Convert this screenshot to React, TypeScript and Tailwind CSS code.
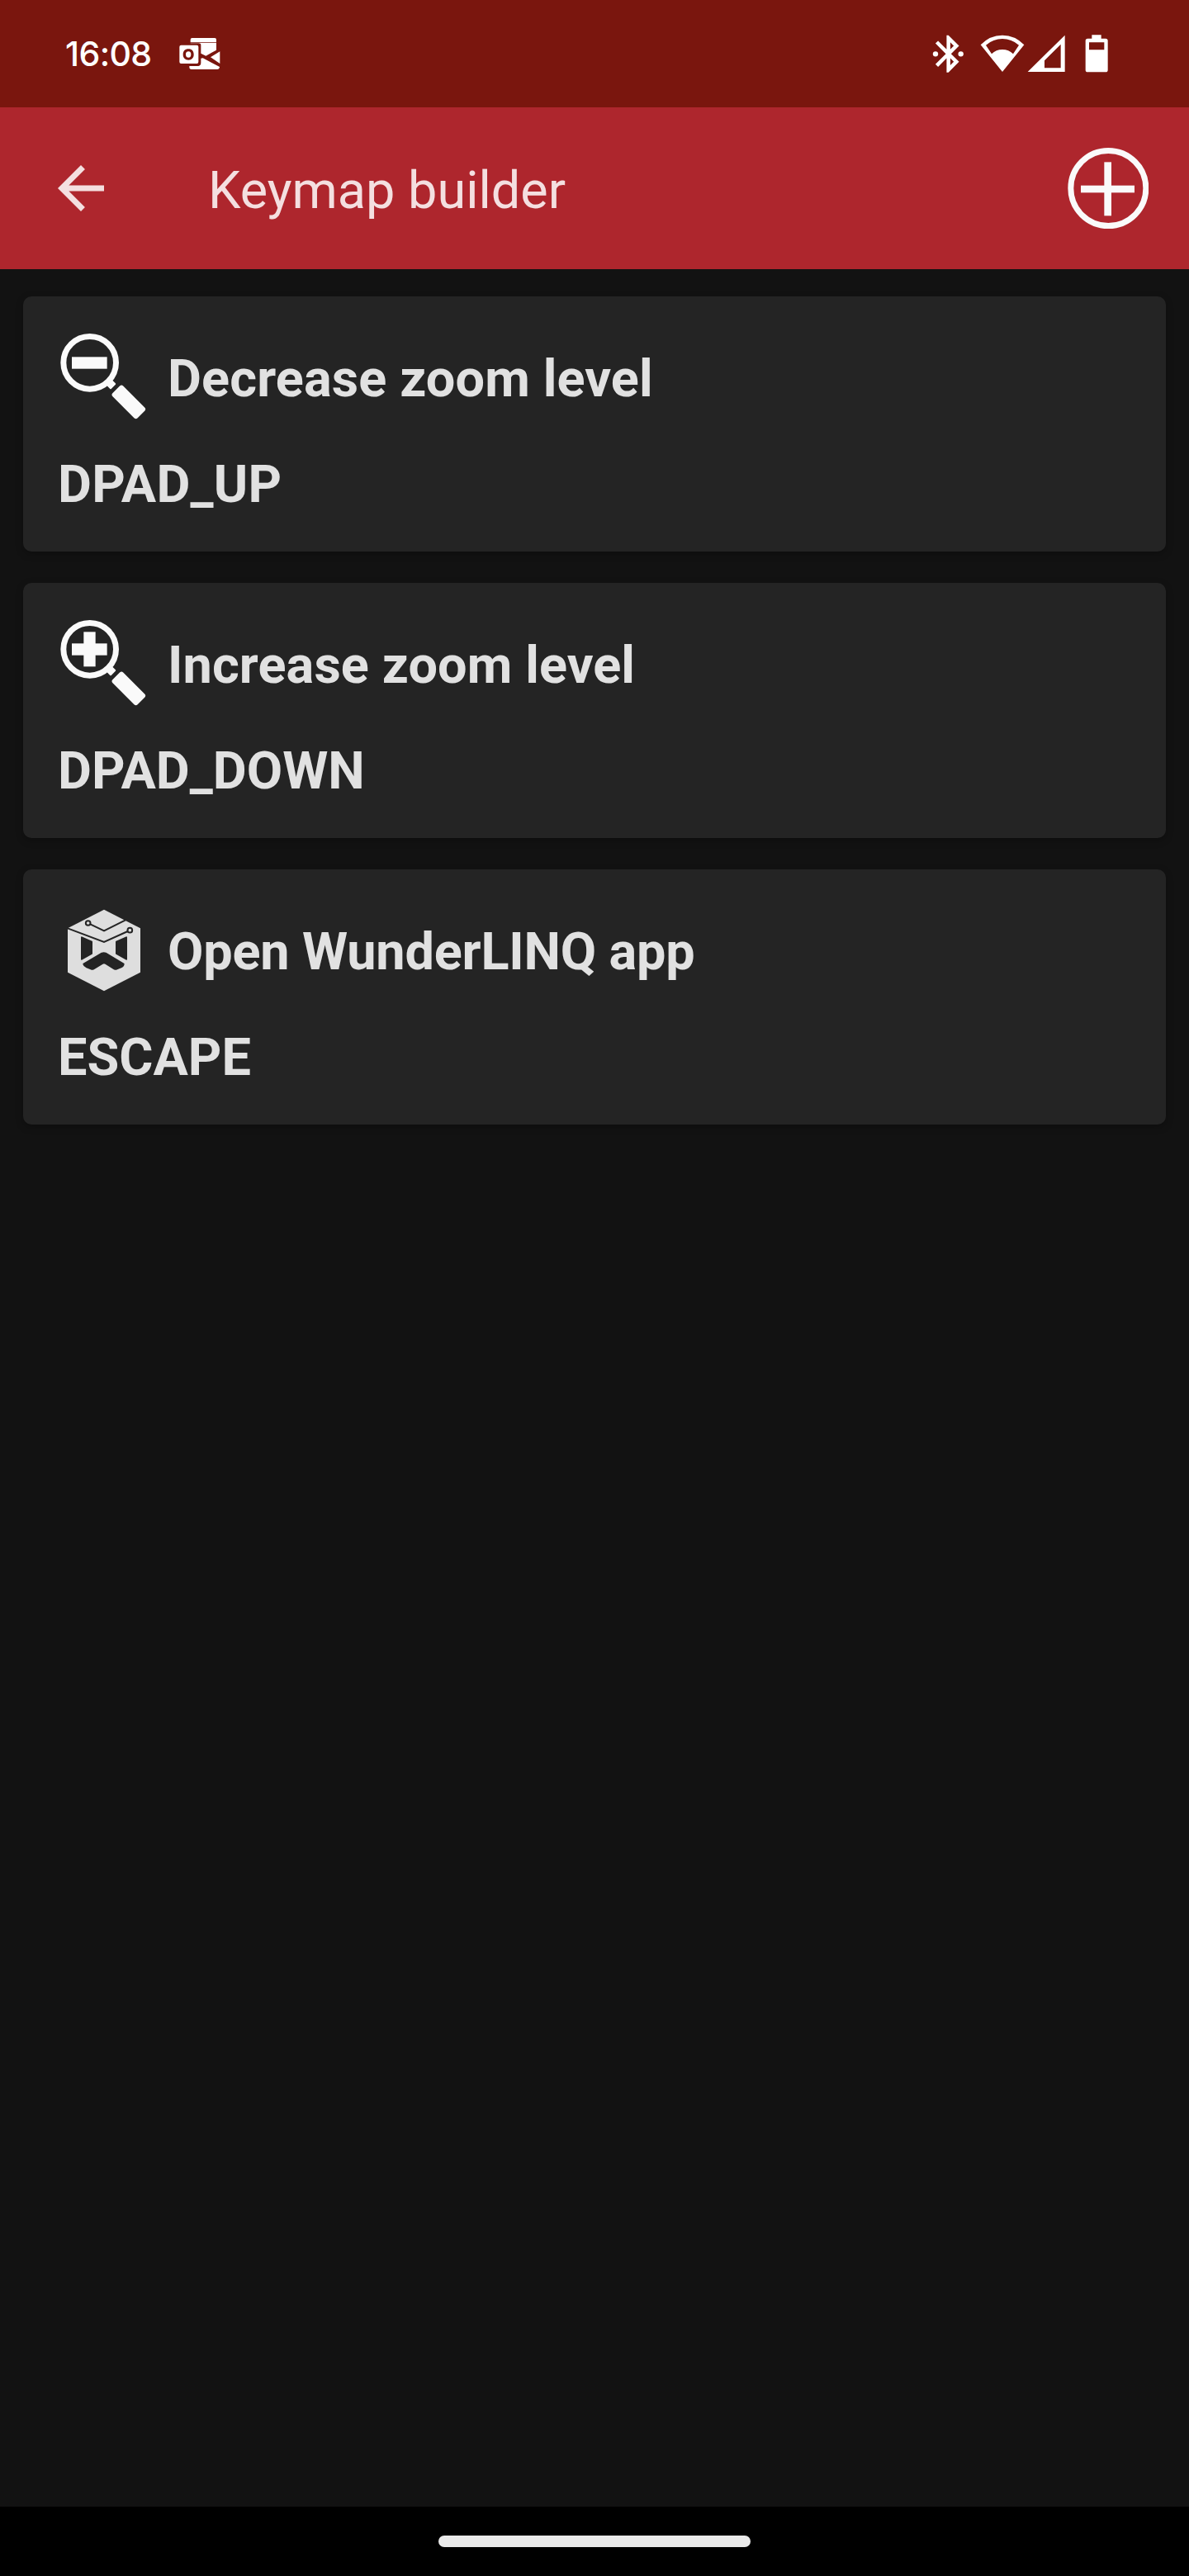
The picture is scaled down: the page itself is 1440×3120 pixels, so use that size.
import React from "react";

function OutlookIcon() {
  return (
    <svg className="h-[38px] w-[50px]" viewBox="470 78 150 114" fill="#fff">
      <path d="M511 93V84Q511 78 517 78H599Q605 78 605 84V93Z" />
      <path d="M511 95H605V122L567 143L549 134V104Q549 97 541 97H511Z" />
      <path d="M584 148L618 127V171Z" />
      <path d="M507 180H540Q549 178 549 168V152L556 151L617 183Q616 192 608 192H515Q507 192 507 184Z" />
      <path
        fillRule="evenodd"
        d="M477 104H534Q540 104 540 110V165Q540 171 534 171H477Q471 171 471 165V110Q471 104 477 104ZM504 118C491 118 484 126 484 138C484 150 491 158 504 158C516 158 523 150 523 138C523 126 516 118 504 118ZM504 127C510 127 513 131 513 138C513 145 510 149 504 149C497 149 494 145 494 138C494 131 497 127 504 127Z"
      />
    </svg>
  );
}

function StatusIcons() {
  return (
    <div className="flex items-center">
      <svg className="h-[46px] w-[39px]" viewBox="59 68 117 138" fill="#fff">
        <path
          transform="translate(37 56.5) scale(6.75)"
          d="M17.71 7.71L12 2h-1v7.59L6.41 5 5 6.41 10.59 12 5 17.59 6.41 19 11 14.41V22h1l5.71-5.71-4.3-4.29 4.3-4.29zM13 5.83l1.88 1.88L13 9.59V5.83zm1.88 10.46L13 18.17v-3.76l1.88 1.88z"
        />
        <circle cx="71" cy="138" r="9.5" />
        <circle cx="163" cy="138" r="9.5" />
      </svg>
      <svg className="ml-[19px] h-[46px] w-[54px]" viewBox="232 68 162 138" fill="#fff">
        <path
          fillRule="evenodd"
          d="M313 203L234 105Q267 70 313 70Q359 70 392 105ZM253 106L274 138Q290 122 313 122Q336 122 352 138L373 106Q346 83 313 83Q280 83 253 106Z"
        />
      </svg>
      <svg className="ml-[3px] h-[46px] w-[46px]" viewBox="403 68 138 138" fill="#fff">
        <path fillRule="evenodd" d="M405 203L540 70V203ZM466 162V189H525V103Z" />
      </svg>
      <svg className="ml-6 h-[46px] w-[28px]" viewBox="613 67 84 138" fill="#fff">
        <path
          fillRule="evenodd"
          d="M638 68H672V81H688Q696 81 696 89V195Q696 203 688 203H623Q615 203 615 195V89Q615 81 623 81H638ZM628 95V122H683V95Z"
        />
      </svg>
    </div>
  );
}

function ZoomIcon({ plus }: { plus?: boolean }) {
  return (
    <svg className="size-28 shrink-0" viewBox="30 39 336 336" fill="#fafafa">
      <circle cx="146" cy="148" r="95.5" fill="none" stroke="#fafafa" strokeWidth="21" />
      <rect x="81" y="127" width="128" height="43" />
      {plus && <rect x="124" y="85" width="43" height="126" />}
      <rect x="-22" y="-14" width="36" height="28" rx="3" transform="translate(222 225) rotate(45)" />
      <rect x="-64" y="-27" width="128" height="54" rx="9" transform="translate(287.5 290.5) rotate(45)" />
    </svg>
  );
}

function WunderlinqIcon() {
  return (
    <svg className="size-28 shrink-0" viewBox="30 36 336 336">
      <path d="M198 50L330 118V278L198 346L66 278V118Z" fill="#dedede" />
      <g fill="none" stroke="#242424" strokeWidth="6">
        <path d="M66 118L198 168L284 129" />
        <path d="M148 103L198 127L276 88" />
        <circle cx="292" cy="125" r="8.5" />
        <circle cx="140" cy="99" r="8.5" />
      </g>
      <g fill="#242424" stroke="#242424" strokeWidth="6" strokeLinejoin="round">
        <path d="M117 151L153 167V210L117 230Z" />
        <path d="M279 151L243 167V210L279 230Z" />
        <path d="M124 248L190 209Q197 206 204 209L269 248Q268 256 260 259L243 266Q239 267 235 265L204 246Q198 242 192 246L160 265Q156 267 152 266L135 259Q126 255 124 248Z" />
      </g>
    </svg>
  );
}

const entries = [
  { icon: <ZoomIcon />, label: "Decrease zoom level", labelClass: "tracking-[0.12px]", key: "DPAD_UP", keyClass: "tracking-[0.2px]" },
  { icon: <ZoomIcon plus />, label: "Increase zoom level", labelClass: "tracking-[0.1px]", key: "DPAD_DOWN", keyClass: "" },
  { icon: <WunderlinqIcon />, label: "Open WunderLINQ app", labelClass: "tracking-[-0.19px]", key: "ESCAPE", keyClass: "" },
];

export default function App() {
  return (
    <div className="flex h-[3120px] w-[1440px] flex-col overflow-hidden bg-[#121212] font-['Roboto',sans-serif]">
      <div className="flex h-[130px] items-center justify-between bg-[#7a160e] pr-[98px] pl-[79px]">
        <div className="flex items-center">
          <div className="flex w-[138px] font-['Inter',sans-serif] text-[41px] leading-none font-medium tracking-[-0.6px] text-white">
            16:08
          </div>
          <OutlookIcon />
        </div>
        <StatusIcons />
      </div>

      <header className="flex h-[196px] items-center bg-[#ae262d] pr-[49px] pl-14">
        <svg className="size-[84px]" viewBox="0 0 24 24" fill="#f4dfe0">
          <path d="M20 11H7.83l5.59-5.59L12 4l-8 8 8 8 1.41-1.41L7.83 13H20v-2z" />
        </svg>
        <h1 className="mt-[5px] ml-28 grow text-[63px] leading-[74px] text-[#f4dfe0]">Keymap builder</h1>
        <svg className="size-[98px]" viewBox="98 87 294 294" fill="#fafafa">
          <circle cx="246" cy="234" r="136.5" fill="none" stroke="#fafafa" strokeWidth="21" />
          <rect x="146" y="224" width="195" height="26" />
          <rect x="231" y="139" width="26" height="195" />
        </svg>
      </header>

      <main className="flex grow flex-col gap-[38px] px-7 pt-[33px]">
        {entries.map((e) => (
          <section
            key={e.key}
            className="h-[309px] rounded-[10px] bg-[#242424] px-[42px] pt-11 text-[63px] leading-[74px] font-bold text-[#e1e1e1] shadow-[0_3px_10px_rgba(0,0,0,0.25)]"
          >
            <div className="flex h-28 items-center gap-[21px]">
              {e.icon}
              <span className={e.labelClass}>{e.label}</span>
            </div>
            <div className="mt-[35px]">
              <span className={e.keyClass}>{e.key}</span>
            </div>
          </section>
        ))}
      </main>

      <div className="flex h-[84px] items-center justify-center bg-black">
        <div className="h-3.5 w-[378px] rounded-full bg-[#eaeaea]" />
      </div>
    </div>
  );
}
